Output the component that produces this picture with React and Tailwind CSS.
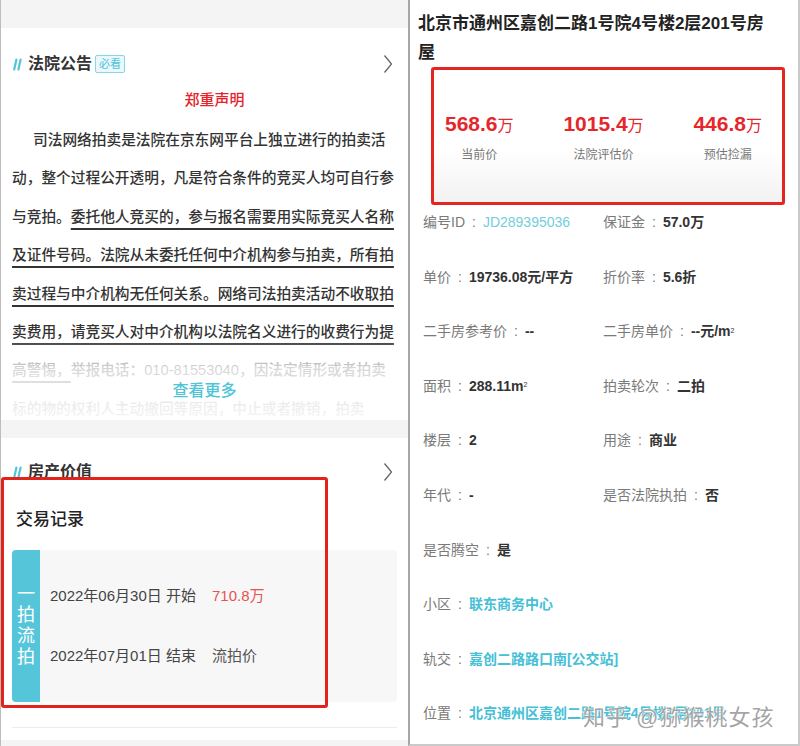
import React from 'react';

const Slashes = () => (
  <svg width="10" height="14" viewBox="0 0 10 14" className="shrink-0">
    <path d="M2.2 12.5 L4.4 2.5 M6.4 12.5 L8.6 2.5" stroke="#4fc6da" strokeWidth="2.2" strokeLinecap="round" />
  </svg>
);

const Chevron = () => (
  <svg width="10" height="20" viewBox="0 0 10 20" fill="none">
    <path d="M1.5 1.5 L8.5 10 L1.5 18.5" stroke="#666" strokeWidth="1.3" />
  </svg>
);

const SectionHeader = ({ title, badge }) => (
  <div className="flex items-center h-[28px] pl-[11px] pr-[15px]">
    <Slashes />
    <span className="ml-[6px] text-[16px] font-bold text-[#333]">{title}</span>
    {badge && (
      <span className="ml-[3px] flex items-center justify-center w-[30px] h-[18px] border border-[#8bd6e4] bg-[#eaf8fb] text-[#4cc3d8] text-[11px] rounded-[2px]">
        {badge}
      </span>
    )}
    <span className="ml-auto flex">
      <Chevron />
    </span>
  </div>
);

// 公告正文（按原排版逐行）
const notice = [
  { pre: '司法网络拍卖是法院在京东网平台上独立进行的拍卖活', indent: true },
  { pre: '动，整个过程公开透明，凡是符合条件的竞买人均可自行参' },
  { pre: '与竞拍。', u: '委托他人竞买的，参与报名需要用实际竞买人名称' },
  { u: '及证件号码。法院从未委托任何中介机构参与拍卖，所有拍' },
  { u: '卖过程与中介机构无任何关系。网络司法拍卖活动不收取拍' },
  { u: '卖费用，请竞买人对中介机构以法院名义进行的收费行为提' },
  { u: '高警惕，', post: '举报电话：010-81553040，因法定情形或者拍卖' },
  { pre: '标的物的权利人主动撤回等原因，中止或者撤销，拍卖' },
];

const prices = [
  { v: '568.6', l: '当前价' },
  { v: '1015.4', l: '法院评估价' },
  { v: '446.8', l: '预估捡漏' },
];

const Sq = () => <sup className="text-[7px] font-normal">2</sup>;

const Val = ({ children }) => <span className="font-bold text-[#333]">{children}</span>;
const Link = ({ children }) => <span className="font-bold text-[#45c0d6]">{children}</span>;

const details = [
  [['编号ID', <span className="text-[#74cddd]">JD289395036</span>], ['保证金', <Val>57.0万</Val>]],
  [['单价', <Val>19736.08元/平方</Val>], ['折价率', <Val>5.6折</Val>]],
  [['二手房参考价', <Val>--</Val>], ['二手房单价', <Val>--元/m<Sq /></Val>]],
  [['面积', <Val>288.11m<Sq /></Val>], ['拍卖轮次', <Val>二拍</Val>]],
  [['楼层', <Val>2</Val>], ['用途', <Val>商业</Val>]],
  [['年代', <Val>-</Val>], ['是否法院执拍', <Val>否</Val>]],
  [['是否腾空', <Val>是</Val>]],
  [['小区', <Link>联东商务中心</Link>]],
  [['轨交', <Link>嘉创二路路口南[公交站]</Link>]],
  [['位置', <Link>北京通州区嘉创二路1号院4号楼2层201号</Link>]],
];

const Field = ({ label, value }) => (
  <span className="whitespace-nowrap">
    <span className="text-[#7a7a7a]">{label}{'\u2002:\u2002'}</span>
    {value}
  </span>
);

export default function App() {
  return (
    <div className="flex w-[800px] h-[746px] overflow-hidden bg-white font-['Liberation_Sans','Noto_Sans_CJK_SC',sans-serif]">
      {/* 左：法院公告 + 房产价值 */}
      <div className="w-[408px] shrink-0 flex flex-col bg-[#f4f4f4] border-l border-[#bdbdbd]">
        <div className="h-[28px] shrink-0" />

        <div className="bg-white h-[392px] shrink-0 pt-[22px]">
          <SectionHeader title="法院公告" badge="必看" />
          <div className="mt-[4px] h-[36px] leading-[36px] text-center pl-[20px] text-[15px] font-medium text-[#e62129]">
            郑重声明
          </div>
          <div className="relative h-[299px] mt-[3px] overflow-hidden pl-[11px] text-[14.7px] font-medium text-[#333]">
            {notice.map((line, i) => (
              <div key={i} className={`h-[38.4px] leading-[38.4px] whitespace-nowrap ${line.indent ? 'pl-[21px]' : ''}`}>
                {line.pre}
                {line.u && (
                  <span className="underline decoration-[1.5px] underline-offset-[6px] decoration-[#333]">{line.u}</span>
                )}
                {line.post}
              </div>
            ))}
            <div className="absolute inset-x-0 top-[218px] bottom-0 bg-linear-to-b from-white/0 via-white/80 via-35% to-white/95" />
            <div className="absolute inset-x-0 top-[258px] leading-[24px] text-center text-[16px] font-medium text-[#4dc4d7]">
              查看更多
            </div>
          </div>
        </div>

        <div className="h-[18px] shrink-0" />

        <div className="relative bg-white h-[302px] shrink-0 pt-[20px]">
          <SectionHeader title="房产价值" />
          <div className="mt-[20px] pl-[15px] h-[28px] leading-[28px] text-[17px] font-medium text-[#222]">交易记录</div>
          <div className="mt-[16px] mx-[11px] h-[152px] flex bg-[#f7f7f8] rounded-[4px]">
            <div className="w-[28px] shrink-0 flex flex-col items-center justify-center bg-[#55c6da] rounded-l-[4px] text-white text-[18px] leading-[21px]">
              <span>一</span>
              <span>拍</span>
              <span>流</span>
              <span>拍</span>
            </div>
            <div className="flex flex-col justify-center gap-[36px] pl-[10px] text-[15px] leading-[24px] text-[#444]">
              <div className="flex">
                <span className="w-[162px]">2022年06月30日 开始</span>
                <span className="text-[#e25555]">710.8万</span>
              </div>
              <div className="flex">
                <span className="w-[162px]">2022年07月01日 结束</span>
                <span className="text-[#555]">流拍价</span>
              </div>
            </div>
          </div>
          <div className="mt-[25px] mx-[11px] h-px bg-[#ececec]" />
          <div className="absolute left-0 top-[39px] w-[327px] h-[231px] border-[3px] border-[#e3221c] rounded-[3px]" />
        </div>
      </div>

      {/* 右：房屋信息 */}
      <div className="relative flex-1 h-[746px] overflow-hidden bg-white border-l-2 border-l-[#a6a6a6] border-r-2 border-r-[#cacaca] border-b-2 border-b-[#cacaca]">
        <div className="pt-[9px] pl-[8px] text-[17px] leading-[29px] font-bold text-[#222]">
          北京市通州区嘉创二路1号院4号楼2层201号房
          <br />
          屋
        </div>

        <div className="ml-[21px] mr-[13px] h-[138px] border-[3px] border-[#e3261f] rounded-[3px] bg-linear-to-b from-white from-60% to-[#f2f2f2] flex justify-between pl-[11px] pr-[20px] pt-[40px]">
          {prices.map((p) => (
            <div key={p.l} className="flex flex-col items-center">
              <div className="h-[28px] leading-[28px] text-[#e5262b] whitespace-nowrap">
                <span className="text-[21px] font-bold">{p.v}</span>
                <span className="text-[16px]">万</span>
              </div>
              <div className="mt-[8px] leading-[18px] text-[12px] text-[#777]">{p.l}</div>
            </div>
          ))}
        </div>

        <div className="pl-[13px] text-[14px]">
          {details.map((row, i) => (
            <div key={i} className="h-[54.6px] pt-[7px] leading-[20px] flex">
              <div className={row.length > 1 ? 'w-[180px] shrink-0' : ''}>
                <Field label={row[0][0]} value={row[0][1]} />
              </div>
              {row[1] && <Field label={row[1][0]} value={row[1][1]} />}
            </div>
          ))}
        </div>

        <div className="absolute left-[173px] top-[701px] text-[22px] tracking-[1px] text-[#8d8d8d]/80 whitespace-nowrap [text-shadow:0_0_2px_#fff,0_0_2px_#fff]">
          知乎 @猕猴桃女孩
        </div>
      </div>
    </div>
  );
}
